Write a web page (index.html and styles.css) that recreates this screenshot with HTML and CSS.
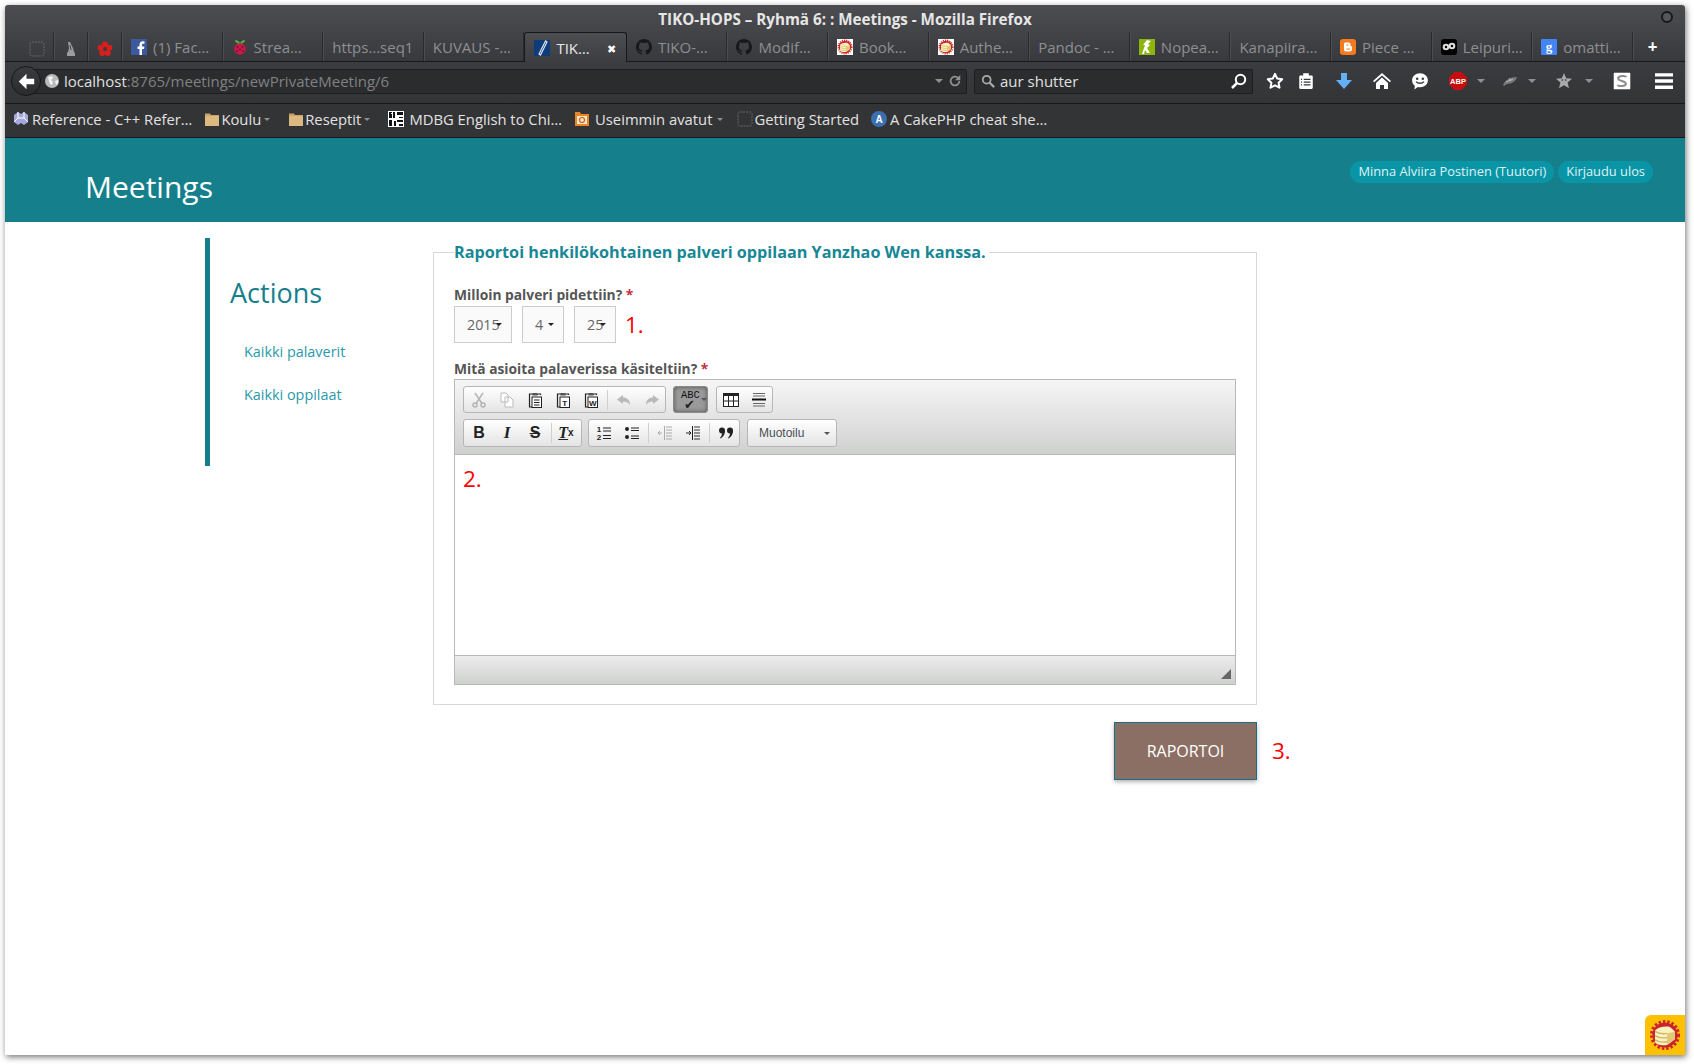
FILE: index.html
```html
<!DOCTYPE html>
<html lang="en">
<head>
    <meta charset="UTF-8">
    <meta name="viewport" content="width=device-width, initial-scale=1.0">
    <title>TIKO-HOPS - Meetings</title>
    <link rel="stylesheet" href="styles.css">
</head>
<body>
    <svg class="defs" width="0" height="0">
        <symbol id="i-blank" viewBox="0 0 16 16"><rect x="1" y="1" width="14" height="14" rx="2" fill="none" stroke="#666" stroke-dasharray="2 1"/></symbol>
        <symbol id="i-pen" viewBox="0 0 16 16"><path d="M5 1l2 0 3 6 1 4 1 1v3H4v-3l1-1 1-4z" fill="#9a9c9e"/><path d="M7 4l1 5" stroke="#444" fill="none"/></symbol>
        <symbol id="i-flower" viewBox="0 0 16 16"><g fill="#d81e1e"><circle cx="8" cy="3.5" r="3"/><circle cx="3.6" cy="6.8" r="3"/><circle cx="12.4" cy="6.8" r="3"/><circle cx="5.2" cy="12" r="3"/><circle cx="10.8" cy="12" r="3"/></g><circle cx="8" cy="8" r="1.6" fill="#3a3b3e"/></symbol>
        <symbol id="i-fb" viewBox="0 0 16 16"><rect width="16" height="16" fill="#3b5a9d"/><path d="M11 16V10h2l.4-2.6H11V6c0-.8.3-1.3 1.3-1.3h1.2V2.4C13.2 2.3 12.500 2.300 11.800 2.300 10 2.300 8.500 3.500 8.500 5.700v1.700h-2V10h2v6z" fill="#fff"/></symbol>
        <symbol id="i-rasp" viewBox="0 0 16 16"><path d="M3 1c2 0 4 1 5 3 1-2 3-3 5-3 0 2-2 3.500-5 4C5 4.500 3 3 3 1z" fill="#58b33a"/><circle cx="8" cy="10" r="5.800" fill="#c51a4a"/><g fill="#7d0f2e"><circle cx="5.500" cy="8" r="1"/><circle cx="10.500" cy="8" r="1"/><circle cx="8" cy="10.500" r="1"/><circle cx="5" cy="12" r="1"/><circle cx="11" cy="12" r="1"/></g></symbol>
        <symbol id="i-vim" viewBox="0 0 16 16"><rect width="16" height="16" fill="#0d3c78"/><path d="M11.500 1L5 14l1.500 1L13 2z" fill="none" stroke="#d8e2ee" stroke-width="1.200"/></symbol>
        <symbol id="i-gh" viewBox="0 0 16 16"><path fill="#17181a" d="M8 0C3.600 0 0 3.600 0 8c0 3.500 2.300 6.500 5.500 7.600.4.100.5-.2.5-.4v-1.400c-2.200.5-2.700-1-2.700-1-.4-.900-.9-1.200-.9-1.200-.7-.5.100-.5.100-.5.800.100 1.200.8 1.200.8.700 1.200 1.900.9 2.300.7.100-.5.300-.9.500-1.100-1.800-.2-3.600-.9-3.600-4 0-.9.300-1.600.8-2.100-.1-.2-.4-1 .100-2.100 0 0 .7-.2 2.200.8.600-.2 1.300-.3 2-.3s1.400.1 2 .3c1.500-1 2.200-.8 2.200-.8.400 1.100.2 1.900.1 2.100.5.600.8 1.300.8 2.100 0 3.100-1.900 3.700-3.700 3.900.3.300.6.800.6 1.500v2.200c0 .2.100.5.600.4C13.700 14.500 16 11.500 16 8c0-4.400-3.600-8-8-8z"/></symbol>
        <symbol id="i-cake" viewBox="0 0 16 16"><circle cx="8" cy="8" r="6.300" fill="#c9242d"/><circle cx="8" cy="8" r="6.800" fill="none" stroke="#c9242d" stroke-width="1.400" stroke-dasharray="1.200 1"/><path d="M3 5.800C4.500 4 8 3.400 10.500 4l2.500 2.200-1.500 1v4l-2.500 1.800c-2.500.5-5.500-.2-6-1.500z" fill="#fbf1bd"/><path d="M3 8.300c1.700 1.100 4 1.300 6 1M3 6.200c1.700 1.100 4 1.300 6 1M3 10.400c1.700 1.100 4 1.300 6 1" stroke="#cdb46c" stroke-width=".7" fill="none"/><path d="M9 7.300l4-1.100v4L9 13z" fill="#e3c877"/></symbol>
        <symbol id="i-book" viewBox="0 0 16 16"><rect width="16" height="16" fill="#fff"/><use href="#i-cake"/></symbol>
        <symbol id="i-nopea" viewBox="0 0 16 16"><rect width="16" height="16" fill="#8db50c"/><path d="M8 1l4 1-3 3 2 1-3 3 3 5H8L6 11l-1 4H3l3-9H4z" fill="#fff"/></symbol>
        <symbol id="i-blogger" viewBox="0 0 16 16"><rect width="16" height="16" rx="3" fill="#f57b1e"/><path d="M5.500 3.500h3c1.200 0 2 .8 2 2V7h.6c.5 0 .9.400.9.900v2.600c0 1.200-1 2-2.200 2H6c-1.200 0-2-.8-2-2V5c0-.8.700-1.500 1.500-1.500z" fill="#fff"/><path d="M6.500 6h2M6.500 10h3.500" stroke="#f57b1e" stroke-width="1.200"/></symbol>
        <symbol id="i-leip" viewBox="0 0 16 16"><rect width="16" height="16" rx="3" fill="#000"/><circle cx="5" cy="8" r="3.300" fill="#ddd"/><circle cx="11" cy="7" r="3.300" fill="#ddd"/><circle cx="5" cy="8" r="1.200" fill="#000"/><circle cx="11" cy="7" r="1.200" fill="#000"/></symbol>
        <symbol id="i-goog" viewBox="0 0 16 16"><rect width="16" height="16" rx="1" fill="#4285f4"/><text x="8" y="12" class="svg-g" text-anchor="middle">g</text></symbol>
        <symbol id="i-back" viewBox="0 0 16 16"><path d="M8 1.500L1.500 8 8 14.500V10.300h6.500V5.700H8z" fill="#fff"/></symbol>
        <symbol id="i-globe" viewBox="0 0 16 16"><circle cx="8" cy="8" r="7" fill="#b9b9b9"/><path d="M4 4l4-1 1 2-2 2 2 2-1 3-2-1-1-3zM11 8l3-1 0 3-2 2z" fill="#f2f2f2"/></symbol>
        <symbol id="i-reload" viewBox="0 0 16 16"><path d="M13 8a5 5 0 1 1-1.500-3.500" fill="none" stroke="#8f9193" stroke-width="2"/><path d="M14 1v6H8z" fill="#8f9193"/></symbol>
        <symbol id="i-mag" viewBox="0 0 16 16"><circle cx="6.500" cy="6.500" r="4.500" fill="none" stroke="#aaa" stroke-width="2"/><path d="M10 10l5 5" stroke="#aaa" stroke-width="2.500"/></symbol>
        <symbol id="i-magw" viewBox="0 0 16 16"><circle cx="9.500" cy="6.500" r="4.700" fill="none" stroke="#fff" stroke-width="2"/><path d="M6 10l-5 5" stroke="#fff" stroke-width="2.500"/></symbol>
        <symbol id="i-star" viewBox="0 0 18 18"><path d="M9 1.800l2.200 4.700 5 .7-3.600 3.500.9 5L9 13.300l-4.500 2.400.9-5L1.800 7.200l5-.7z" fill="none" stroke="#fff" stroke-width="2" stroke-linejoin="round"/></symbol>
        <symbol id="i-clip" viewBox="0 0 16 16"><path d="M3 3h2.500V1h5v2H13c.6 0 1 .4 1 1v10c0 .6-.4 1-1 1H3c-.6 0-1-.4-1-1V4c0-.6.4-1 1-1z" fill="#fff"/><path d="M6 6.500h6M6 9h6M6 11.500h6M3.500 6.500h1M3.500 9h1M3.500 11.500h1" stroke="#38393c" stroke-width="1.200"/></symbol>
        <symbol id="i-down" viewBox="0 0 18 18"><path d="M6 1h6v7h5l-8 9-8-9h5z" fill="#62b1f6"/></symbol>
        <symbol id="i-home" viewBox="0 0 18 18"><path d="M9 1L0 9l1.200 1.300L9 3.500l7.800 6.800L18 9z" fill="#fff"/><path d="M3 11l6-5.500 6 5.500v6h-4v-4H7v4H3z" fill="#fff"/></symbol>
        <symbol id="i-chat" viewBox="0 0 16 16"><path d="M8 1c4 0 7 2.700 7 6.300s-3 6.200-7 6.200c-.7 0-1.300-.1-1.900-.2L3 15.500l.4-3.200C1.900 11.100 1 9.400 1 7.300 1 3.700 4 1 8 1z" fill="#fff"/><circle cx="5.500" cy="6" r="1.100" fill="#38393c"/><circle cx="10.500" cy="6" r="1.100" fill="#38393c"/><path d="M4.500 8.500c1.500 2 5.500 2 7 0" stroke="#38393c" stroke-width="1.200" fill="none"/></symbol>
        <symbol id="i-abp" viewBox="0 0 18 18"><path d="M5.500 0h7L18 5.500v7L12.500 18h-7L0 12.500v-7z" fill="#c70d0d"/><text x="9" y="12" class="svg-abp" text-anchor="middle">ABP</text></symbol>
        <symbol id="i-feather" viewBox="0 0 18 18"><path d="M2 13C4 8 9 5 16 5c-1 4-5 7-10 7l-3 2z" fill="#77797b"/><path d="M5 10l7-3M8 6l2 3" stroke="#c8c8c8" stroke-width=".8"/></symbol>
        <symbol id="i-star2" viewBox="0 0 18 18"><path d="M9 1l2.200 5.300 5.800.5-4.400 3.800 1.400 5.700L9 13.300 4 16.300l1.400-5.700L1 6.800l5.800-.5z" fill="#a9a9a9"/><circle cx="7.300" cy="8" r=".9" fill="#555"/><circle cx="10.700" cy="8" r=".9" fill="#555"/></symbol>
        <symbol id="i-s" viewBox="0 0 16 16"><rect width="16" height="16" fill="#fff" stroke="#000"/><path d="M12 4.500C11 3 5 3 4.500 5.500S11.500 8 11.500 10.500 5 13 4 11.500" fill="none" stroke="#8d8d8d" stroke-width="1.800"/></symbol>
        <symbol id="i-menu" viewBox="0 0 16 14"><path d="M0 0h16v3H0zM0 5.500h16v3H0zM0 11h16v3H0z" fill="#fff"/></symbol>
        <symbol id="i-cube" viewBox="0 0 16 16"><path d="M1 4l4-3 3 2 3-2 4 3v7l-4 3-3-2-3 2-4-3z" fill="#a7a7e0"/><path d="M5 1v6l-4 4M11 1v6l4 4M5 7h6" stroke="#fff" fill="none"/></symbol>
        <symbol id="i-folder" viewBox="0 0 16 16"><path d="M1 2.500h5l1 1.500h8v11H1z" fill="#c9a265"/><rect x="1" y="5" width="14" height="10" rx="1" fill="#dcb980"/></symbol>
        <symbol id="i-mdbg" viewBox="0 0 16 16"><rect width="16" height="16" fill="#fff"/><path d="M1 1h3v1H3v1h1v4H1zM5 1h2v6H5zM9 1h6v3H9zM1 9h3v6H1zM9 9h6v2H9zM6 10h2v5H6zM11 6h4v1h-4zM11 13h4v2h-4z" fill="#111"/></symbol>
        <symbol id="i-recent" viewBox="0 0 16 16"><path d="M1 1h5l1 2h8v12H1z" fill="#e5862a"/><rect x="3" y="5" width="10" height="8" fill="#fbe3c4"/><circle cx="8" cy="9" r="2.500" fill="none" stroke="#c8621a" stroke-width="1.200"/></symbol>
        <symbol id="i-a" viewBox="0 0 16 16"><circle cx="8" cy="8" r="8" fill="#3a6fb0"/><text x="8" y="11.500" class="svg-a" text-anchor="middle">A</text></symbol>
        <symbol id="e-cut" viewBox="0 0 16 16"><g fill="none" stroke="#b4b4b4" stroke-width="1.500"><circle cx="4" cy="13" r="2"/><circle cx="12" cy="13" r="2"/><path d="M5 11.500L12 1M11 11.500L4 1"/></g></symbol>
        <symbol id="e-copy" viewBox="0 0 16 16"><path d="M2 1h5l2 2v7H2zM6 5h5l3 3v7H6z" fill="#fff" stroke="#bbb"/></symbol>
        <symbol id="e-paste" viewBox="0 0 16 16"><path d="M5 2H2.500v13H6M11 2h2.500v1" fill="none" stroke="#222" stroke-width="1.200"/><rect x="5" y="1" width="6" height="2.500" rx="1" fill="#555"/><rect x="5" y="5" width="9.500" height="10.500" fill="#fff" stroke="#222"/><path d="M7 8h5.500M7 10.500h5.500M7 13h5.500" stroke="#222"/></symbol>
        <symbol id="e-pastet" viewBox="0 0 16 16"><path d="M5 2H2.500v13H6M11 2h2.500v1" fill="none" stroke="#222" stroke-width="1.200"/><rect x="5" y="1" width="6" height="2.500" rx="1" fill="#555"/><rect x="5" y="5" width="9.500" height="10.500" fill="#fff" stroke="#222"/><text x="9.800" y="13.800" class="svg-e" text-anchor="middle">T</text></symbol>
        <symbol id="e-pastew" viewBox="0 0 16 16"><path d="M5 2H2.500v13H6M11 2h2.500v1" fill="none" stroke="#222" stroke-width="1.200"/><rect x="5" y="1" width="6" height="2.500" rx="1" fill="#555"/><rect x="5" y="5" width="9.500" height="10.500" fill="#fff" stroke="#222"/><text x="9.800" y="13.500" class="svg-e" text-anchor="middle">W</text></symbol>
        <symbol id="e-undo" viewBox="0 0 16 16"><path d="M7 3L1 7.500 7 12V9.500c3 0 5 .8 7 3.500 0-5-3-7.500-7-7.500z" fill="#b9b9b9"/></symbol>
        <symbol id="e-redo" viewBox="0 0 16 16"><path d="M9 3l6 4.500L9 12V9.500c-3 0-5 .8-7 3.500 0-5 3-7.500 7-7.500z" fill="#b9b9b9"/></symbol>
        <symbol id="e-table" viewBox="0 0 16 16"><rect x=".5" y="1.500" width="15" height="13" fill="#fff" stroke="#222"/><rect x="0" y="1" width="16" height="3" fill="#222"/><path d="M5.500 4v10M10.500 4v10M1 9h14" stroke="#222"/></symbol>
        <symbol id="e-hr" viewBox="0 0 16 16"><path d="M2 1.500h12M2 4h12M2 11.500h12M2 14h12" stroke="#666"/><path d="M1 7.500h14" stroke="#111" stroke-width="2"/></symbol>
        <symbol id="e-ol" viewBox="0 0 16 16"><path d="M7 3h8M7 6h8M7 10.500h8M7 13.500h8" stroke="#222" stroke-width="1.200"/><text x="3" y="7" class="svg-e" text-anchor="middle">1</text><text x="3" y="14.500" class="svg-e" text-anchor="middle">2</text></symbol>
        <symbol id="e-ul" viewBox="0 0 16 16"><circle cx="3" cy="4" r="2" fill="#222"/><circle cx="3" cy="12" r="2" fill="#222"/><path d="M7 3h8M7 5.500h8M7 11h8M7 13.500h8" stroke="#222" stroke-width="1.200"/></symbol>
        <symbol id="e-out" viewBox="0 0 16 16"><path d="M7.500 1v14" stroke="#aaa"/><path d="M9 2h6M9 5h6M9 8h6M9 11h6M9 14h6" stroke="#aaa"/><path d="M1 8h4M3 6L1 8l2 2" stroke="#aaa" fill="none"/></symbol>
        <symbol id="e-in" viewBox="0 0 16 16"><path d="M7.500 1v14" stroke="#222"/><path d="M9 2h6M9 5h6M9 8h6M9 11h6M9 14h6" stroke="#333"/><path d="M1 8h4M4 6l2 2-2 2" stroke="#222" fill="none"/></symbol>
        <symbol id="e-quote" viewBox="0 0 16 16"><circle cx="4" cy="5.500" r="3" fill="#222"/><path d="M7 5.500c0 3.500-1.500 6.500-4.500 8l-.5-.8c1.500-1.200 2-3 2-4.700z" fill="#222"/><circle cx="12" cy="5.500" r="3" fill="#222"/><path d="M15 5.500c0 3.500-1.500 6.500-4.500 8l-.5-.8c1.500-1.200 2-3 2-4.700z" fill="#222"/></symbol>
    </svg>

    <div class="window">
        <div class="titlebar">
            <span class="title">TIKO-HOPS – Ryhmä 6: : Meetings - Mozilla Firefox</span>
            <span class="win-dot"></span>
        </div>

        <div class="tabs">
            <div class="tab pinned"><svg class="ico"><use href="#i-blank"/></svg></div>
            <div class="tab pinned"><svg class="ico"><use href="#i-pen"/></svg></div>
            <div class="tab pinned"><svg class="ico"><use href="#i-flower"/></svg></div>
            <div class="tab"><svg class="ico"><use href="#i-fb"/></svg>(1) Fac…</div>
            <div class="tab"><svg class="ico"><use href="#i-rasp"/></svg>Strea…</div>
            <div class="tab">https…seq1</div>
            <div class="tab">KUVAUS -…</div>
            <div class="tab active"><svg class="ico"><use href="#i-vim"/></svg>TIK…<span class="tab-close">✖</span></div>
            <div class="tab"><svg class="ico"><use href="#i-gh"/></svg>TIKO-…</div>
            <div class="tab"><svg class="ico"><use href="#i-gh"/></svg>Modif…</div>
            <div class="tab"><svg class="ico"><use href="#i-book"/></svg>Book…</div>
            <div class="tab"><svg class="ico"><use href="#i-book"/></svg>Authe…</div>
            <div class="tab">Pandoc - …</div>
            <div class="tab"><svg class="ico"><use href="#i-nopea"/></svg>Nopea…</div>
            <div class="tab">Kanapiira…</div>
            <div class="tab"><svg class="ico"><use href="#i-blogger"/></svg>Piece …</div>
            <div class="tab"><svg class="ico"><use href="#i-leip"/></svg>Leipuri…</div>
            <div class="tab"><svg class="ico"><use href="#i-goog"/></svg>omatti…</div>
            <div class="tab-new">+</div>
        </div>

        <div class="navbar">
            <div class="back"><svg class="ico big"><use href="#i-back"/></svg></div>
            <div class="urlbar">
                <svg class="ico"><use href="#i-globe"/></svg>
                <span class="url"><span class="url-host">localhost</span>:8765/meetings/newPrivateMeeting/6</span>
                <span class="caret dim"></span>
                <svg class="ico small"><use href="#i-reload"/></svg>
            </div>
            <div class="searchbar">
                <svg class="ico small"><use href="#i-mag"/></svg>
                <span class="search-text">aur shutter</span>
                <svg class="ico"><use href="#i-magw"/></svg>
            </div>
            <div class="tools">
                <svg class="tool"><use href="#i-star"/></svg>
                <svg class="tool"><use href="#i-clip"/></svg>
                <svg class="tool"><use href="#i-down"/></svg>
                <svg class="tool"><use href="#i-home"/></svg>
                <svg class="tool"><use href="#i-chat"/></svg>
                <svg class="tool"><use href="#i-abp"/></svg>
                <span class="tool-arrow"><span class="caret dim"></span></span>
                <svg class="tool"><use href="#i-feather"/></svg>
                <span class="tool-arrow"><span class="caret dim"></span></span>
                <svg class="tool"><use href="#i-star2"/></svg>
                <span class="tool-arrow"><span class="caret dim"></span></span>
                <svg class="tool"><use href="#i-s"/></svg>
                <svg class="tool"><use href="#i-menu"/></svg>
            </div>
        </div>

        <div class="bookmarks">
            <div class="bm"><svg class="ico"><use href="#i-cube"/></svg>Reference - C++ Refer…</div>
            <div class="bm bm-tight"><svg class="ico"><use href="#i-folder"/></svg>Koulu<span class="caret dim"></span></div>
            <div class="bm bm-tight"><svg class="ico"><use href="#i-folder"/></svg>Reseptit<span class="caret dim"></span></div>
            <div class="bm bm-wide"><svg class="ico"><use href="#i-mdbg"/></svg>MDBG English to Chi…</div>
            <div class="bm bm-wide"><svg class="ico"><use href="#i-recent"/></svg>Useimmin avatut<span class="caret dim"></span></div>
            <div class="bm bm-tight"><svg class="ico"><use href="#i-blank"/></svg>Getting Started</div>
            <div class="bm"><svg class="ico"><use href="#i-a"/></svg>A CakePHP cheat she…</div>
        </div>

        <div class="page">
            <header class="page-header">
                <h1>Meetings</h1>
                <div class="user-links">
                    <a class="pill">Minna Alviira Postinen (Tuutori)</a>
                    <a class="pill">Kirjaudu ulos</a>
                </div>
            </header>

            <div class="content">
                <nav class="actions">
                    <h2>Actions</h2>
                    <ul>
                        <li><a>Kaikki palaverit</a></li>
                        <li><a>Kaikki oppilaat</a></li>
                    </ul>
                </nav>

                <form class="main">
                    <fieldset>
                        <legend>Raportoi henkilökohtainen palveri oppilaan Yanzhao Wen kanssa.</legend>

                        <label class="field-label">Milloin palveri pidettiin? <span class="req">*</span></label>
                        <div class="date-row">
                            <div class="sel sel-year">2015<span class="caret"></span></div>
                            <div class="sel sel-month">4<span class="caret"></span></div>
                            <div class="sel sel-day">25<span class="caret"></span></div>
                            <span class="note note-date">1.</span>
                        </div>

                        <label class="field-label second">Mitä asioita palaverissa käsiteltiin? <span class="req">*</span></label>
                        <div class="editor">
                            <div class="ck-toolbar">
                                <div class="ck-row">
                                    <div class="ck-group ck-clip">
                                        <span class="ck-btn"><svg><use href="#e-cut"/></svg></span>
                                        <span class="ck-btn"><svg><use href="#e-copy"/></svg></span>
                                        <span class="ck-btn"><svg><use href="#e-paste"/></svg></span>
                                        <span class="ck-btn"><svg><use href="#e-pastet"/></svg></span>
                                        <span class="ck-btn"><svg><use href="#e-pastew"/></svg></span>
                                        <span class="ck-sep"></span>
                                        <span class="ck-btn"><svg><use href="#e-undo"/></svg></span>
                                        <span class="ck-btn"><svg><use href="#e-redo"/></svg></span>
                                    </div>
                                    <div class="ck-group ck-on">
                                        <span class="abc">ABC</span><span class="check">✔</span><span class="caret dark"></span>
                                    </div>
                                    <div class="ck-group ck-table">
                                        <span class="ck-btn"><svg><use href="#e-table"/></svg></span>
                                        <span class="ck-btn"><svg><use href="#e-hr"/></svg></span>
                                    </div>
                                </div>
                                <div class="ck-row">
                                    <div class="ck-group ck-basic">
                                        <span class="ck-btn ck-b">B</span>
                                        <span class="ck-btn ck-i">I</span>
                                        <span class="ck-btn ck-s">S</span>
                                        <span class="ck-sep"></span>
                                        <span class="ck-btn ck-tx"><u>T</u><sub>x</sub></span>
                                    </div>
                                    <div class="ck-group ck-lists">
                                        <span class="ck-btn"><svg><use href="#e-ol"/></svg></span>
                                        <span class="ck-btn"><svg><use href="#e-ul"/></svg></span>
                                        <span class="ck-sep"></span>
                                        <span class="ck-btn"><svg><use href="#e-out"/></svg></span>
                                        <span class="ck-btn"><svg><use href="#e-in"/></svg></span>
                                        <span class="ck-sep"></span>
                                        <span class="ck-btn"><svg><use href="#e-quote"/></svg></span>
                                    </div>
                                    <div class="ck-group ck-combo">Muotoilu<span class="caret dark"></span></div>
                                </div>
                            </div>
                            <div class="ck-content"><span class="note">2.</span></div>
                            <div class="ck-bottom"><span class="ck-resize"></span></div>
                        </div>
                    </fieldset>

                    <div class="form-actions">
                        <button type="button" class="submit">RAPORTOI</button>
                        <span class="note">3.</span>
                    </div>
                </form>
            </div>

            <div class="debug-toggle"><svg><use href="#i-cake"/></svg></div>
        </div>
    </div>
</body>
</html>
```

FILE: styles.css
```css
* {
    box-sizing: border-box;
}
html, body {
    margin: 0;
    height: 100%;
    background: #fff;
}
body {
    font-family: "Open Sans", "Noto Sans", sans-serif;
    overflow: hidden;
}
.defs {
    display: none;
}
.svg-g {
    font: bold 13px "Liberation Serif", serif;
    fill: #fff;
}
.svg-abp {
    font: bold 7.5px "Liberation Sans", sans-serif;
    fill: #fff;
}
.svg-a {
    font: bold 10px "Liberation Sans", sans-serif;
    fill: #fff;
}
.svg-e {
    font: bold 8px "Liberation Sans", sans-serif;
    fill: #222;
}

.window {
    position: relative;
    width: 1680px;
    height: 1050px;
    margin: 5px 0 0 5px;
    display: flex;
    flex-direction: column;
    background: #fff;
    box-shadow: 1px 2px 6px rgba(0, 0, 0, .55);
    border-radius: 3px 3px 0 0;
}

.ico {
    width: 16px;
    height: 16px;
    flex: none;
}
.ico.small {
    width: 14px;
    height: 14px;
}
.ico.big {
    width: 19px;
    height: 19px;
}
.caret {
    display: inline-block;
    width: 0;
    height: 0;
    border-left: 3px solid transparent;
    border-right: 3px solid transparent;
    border-top: 3px solid #222;
}
.caret.dim {
    border-top-color: #8e9092;
    border-left-width: 4px;
    border-right-width: 4px;
    border-top-width: 4px;
}
.caret.dark {
    border-top-color: #555;
}

/* firefox chrome */
.titlebar {
    height: 27px;
    display: flex;
    align-items: center;
    justify-content: center;
    position: relative;
    background: linear-gradient(#4c4d51, #434447);
    border-radius: 3px 3px 0 0;
}
.title {
    font-size: 15.200px;
    font-weight: 700;
    color: #e6e6e6;
}
.win-dot {
    position: absolute;
    right: 12px;
    top: 6px;
    width: 12px;
    height: 12px;
    border-radius: 50%;
    background: #55565a;
    border: 2px solid #17181a;
}

.tabs {
    height: 30px;
    display: flex;
    padding-left: 15px;
    background: linear-gradient(#434447, #38393c);
    border-bottom: 1px solid #17181a;
}
.tab {
    width: 100.600px;
    display: flex;
    align-items: center;
    gap: 6px;
    padding: 1px 0 0 9px;
    font-size: 15px;
    color: #8d8f92;
    white-space: nowrap;
    border-right: 1px solid #2a2b2d;
    box-shadow: 1px 0 0 #4c4d50;
}
.tab.pinned {
    width: 34px;
    justify-content: center;
    padding: 4px 0 0;
}
.tab.active {
    position: relative;
    width: 102.5px;
    height: 30px;
    color: #e8e8e8;
    background: linear-gradient(#4d4e52, #3c3d40);
    border: 1px solid #17181a;
    border-bottom: 0;
    border-radius: 3px 3px 0 0;
    box-shadow: none;
}
.tab-close {
    margin-left: 11px;
    font-size: 11px;
    color: #fff;
}
.tab-new {
    margin-left: 15px;
    font-size: 17px;
    font-weight: 700;
    line-height: 29px;
    color: #fff;
}

.navbar {
    height: 42px;
    display: flex;
    align-items: center;
    position: relative;
    padding-left: 27px;
    background: linear-gradient(#3b3c3f, #333436);
    border-bottom: 1px solid #17181a;
}
.back {
    position: absolute;
    left: 6px;
    top: 4px;
    z-index: 1;
    width: 30px;
    height: 30px;
    border-radius: 50%;
    display: flex;
    align-items: center;
    justify-content: center;
    background: linear-gradient(#3a3b3e, #2b2c2e);
    border: 1px solid #17181a;
}
.urlbar, .searchbar {
    height: 25px;
    margin-top: -3px;
    display: flex;
    align-items: center;
    background: #2b2c2e;
    border: 1px solid #1c1d1e;
    border-radius: 2px;
    font-size: 15px;
}
.urlbar {
    width: 935px;
    padding: 0 4px 0 11px;
}
.url {
    flex: 1;
    margin-left: 4px;
    color: #7f8184;
}
.url-host {
    color: #e0e0e0;
}
.urlbar .caret {
    margin-right: 5px;
}
.searchbar {
    width: 279px;
    margin-left: 7px;
    padding: 0 5px 0 6px;
}
.search-text {
    flex: 1;
    margin-left: 5px;
    color: #e0e0e0;
}
.tools {
    display: grid;
    grid-template-columns: 31px 38px 38px 38px 38px 23px 29px 22px 32px 25px 33px 42px 18px;
    align-items: center;
    margin-left: 13px;
    margin-top: -3px;
}
.tool {
    width: 18px;
    height: 18px;
}
.tool-arrow {
    display: flex;
    justify-content: center;
    width: 18px;
}

.bookmarks {
    height: 34px;
    display: flex;
    align-items: center;
    gap: 12px;
    padding: 0 0 3px 8px;
    background: #333436;
    border-bottom: 1px solid #17181a;
}
.bm {
    display: flex;
    align-items: center;
    gap: 3px;
    font-size: 14.800px;
    color: #e2e2e2;
    white-space: nowrap;
}
.bm-tight {
    gap: 1px;
}
.bm-wide {
    gap: 5px;
}
.bm .caret {
    border-left-width: 3px;
    border-right-width: 3px;
    border-top-width: 3px;
    margin-left: 2px;
    margin-right: 6px;
}
.bm-wide .caret {
    margin-left: 0;
    margin-right: 2px;
}

/* cake page */
.page {
    flex: 1;
    display: flex;
    flex-direction: column;
}
.page-header {
    height: 84px;
    display: flex;
    justify-content: space-between;
    padding: 0 32px 0 80px;
    background: #15808c;
}
.page-header h1 {
    margin: 27px 0 0;
    font-size: 30px;
    font-weight: 400;
    line-height: 44px;
    color: #fff;
}
.user-links {
    display: flex;
    gap: 4px;
    padding-top: 23px;
}
.pill {
    height: 22px;
    padding: 0 8px;
    border-radius: 11px;
    font-size: 12.850px;
    line-height: 21px;
    color: #dff3f5;
    background: #0a95a6;
}

.content {
    display: flex;
    padding: 16px 0 0 200px;
}
.actions {
    width: 228px;
    height: 228px;
    padding: 36px 0 0 20px;
    border-left: 5px solid #15808c;
}
.actions h2 {
    margin: 0;
    font-size: 27px;
    font-weight: 400;
    line-height: 38px;
    color: #15808c;
}
.actions ul {
    margin: 30px 0 0;
    padding: 0 0 0 14px;
    list-style: none;
}
.actions li {
    height: 43px;
    font-size: 14.400px;
    line-height: 20px;
    color: #2b99a9;
}

.main {
    width: 900px;
}
fieldset {
    width: 824px;
    height: 464px;
    margin: 3px 0 0;
    padding: 23px 20px 20px;
    border: 1px solid #d8d8d8;
}
legend {
    padding: 0;
    margin-left: 0;
    padding-right: 3px;
    font-size: 16.200px;
    font-weight: 700;
    color: #178795;
}
.field-label {
    display: block;
    font-size: 13.800px;
    font-weight: 700;
    line-height: 18px;
    color: #555;
    margin-top: 0;
}
.field-label.second {
    margin-top: 17px;
}
.req {
    color: #c4303c;
}
.date-row {
    display: flex;
    align-items: center;
    gap: 10px;
    margin-top: 2px;
}
.sel {
    position: relative;
    height: 37px;
    padding-left: 12px;
    font-size: 14.300px;
    line-height: 36px;
    color: #666;
    background: #fafafa;
    border: 1px solid #ccc;
}
.sel-year {
    width: 58px;
}
.sel-month {
    width: 42px;
}
.sel-day {
    width: 42px;
}
.sel .caret {
    position: absolute;
    right: 9px;
    top: 16px;
}
.note {
    font-size: 22.500px;
    line-height: 32px;
    color: #f00;
}
.note-date {
    margin-left: -1px;
}

.editor {
    width: 782px;
    height: 306px;
    margin-top: 1px;
    display: flex;
    flex-direction: column;
    border: 1px solid #b8b8b8;
}
.ck-toolbar {
    height: 75px;
    padding: 6px 8px 0;
    background: linear-gradient(#f6f6f6, #cfd1cf);
    border-bottom: 1px solid #b8b8b8;
}
.ck-row {
    display: flex;
    gap: 6px;
    margin-bottom: 6px;
}
.ck-group {
    height: 28px;
    display: flex;
    align-items: center;
    padding: 0 1px;
    background: linear-gradient(#fff, #e4e4e4);
    border: 1px solid #b6b6b6;
    border-radius: 3px;
}
.ck-row:first-child .ck-group {
    height: 27px;
}
.ck-btn {
    width: 28px;
    flex: none;
    display: flex;
    align-items: center;
    justify-content: center;
    font-family: "Liberation Sans", sans-serif;
    font-size: 16px;
    color: #222;
}
.ck-btn svg {
    width: 16px;
    height: 16px;
}
.ck-b {
    font-weight: 700;
}
.ck-i {
    font-weight: 700;
    font-style: italic;
    font-family: "Liberation Serif", serif;
    font-size: 17px;
}
.ck-s {
    font-weight: 700;
    text-decoration: line-through;
}
.ck-tx {
    width: 24px;
    font-style: italic;
    font-weight: 700;
    font-family: "Liberation Serif", serif;
    font-size: 16px;
}
.ck-tx sub {
    font-family: "Liberation Sans", sans-serif;
    font-style: normal;
    font-size: 10px;
    line-height: 0;
}
.ck-sep {
    width: 1px;
    height: 20px;
    margin: 0 2px;
    flex: none;
    background: #cfcfcf;
}
.ck-clip {
    width: 203px;
}
.ck-on {
    width: 35px;
    margin-left: 1px;
    position: relative;
    padding-left: 7px;
    background: #9a9a9a;
    border-color: #8a8a8a;
    box-shadow: inset 0 0 4px rgba(0, 0, 0, .5);
}
.abc {
    font-family: "Liberation Mono", monospace;
    font-size: 10.500px;
    line-height: 9px;
    margin-top: -9px;
    color: #111;
}
.check {
    position: absolute;
    left: 10px;
    top: 11px;
    font-size: 13px;
    line-height: 12px;
    color: #222;
}
.ck-on .caret {
    margin-left: 1px;
}
.ck-table {
    width: 57px;
    margin-left: 2px;
    padding: 0;
}
.ck-basic {
    width: 119px;
}
.ck-lists {
    width: 152px;
}
.ck-combo {
    width: 90px;
    margin-left: 1px;
    justify-content: space-between;
    padding: 0 6px 0 11px;
    font-family: "Liberation Sans", sans-serif;
    font-size: 12px;
    color: #484f56;
}
.ck-content {
    flex: 1;
    padding: 8px 8px;
    background: #fff;
}
.ck-bottom {
    height: 29px;
    position: relative;
    background: linear-gradient(#ececec, #cfd1cf);
    border-top: 1px solid #b8b8b8;
}
.ck-resize {
    position: absolute;
    right: 4px;
    bottom: 5px;
    width: 0;
    height: 0;
    border-left: 10px solid transparent;
    border-bottom: 10px solid #666;
}

.form-actions {
    display: flex;
    align-items: center;
    gap: 15px;
    margin-top: 17px;
    padding-left: 681px;
}
.submit {
    width: 143px;
    height: 58px;
    font-family: "Open Sans", sans-serif;
    font-size: 16px;
    color: #fff;
    background: #8c6f64;
    border: 1px solid #15718a;
    box-shadow: 0 2px 4px rgba(0, 0, 0, .3);
}

.debug-toggle {
    position: absolute;
    right: 0;
    bottom: 0;
    width: 40px;
    height: 40px;
    padding: 4px;
    background: #ffc000;
    border-radius: 6px 0 0 0;
}
.debug-toggle svg {
    width: 32px;
    height: 32px;
}
```
